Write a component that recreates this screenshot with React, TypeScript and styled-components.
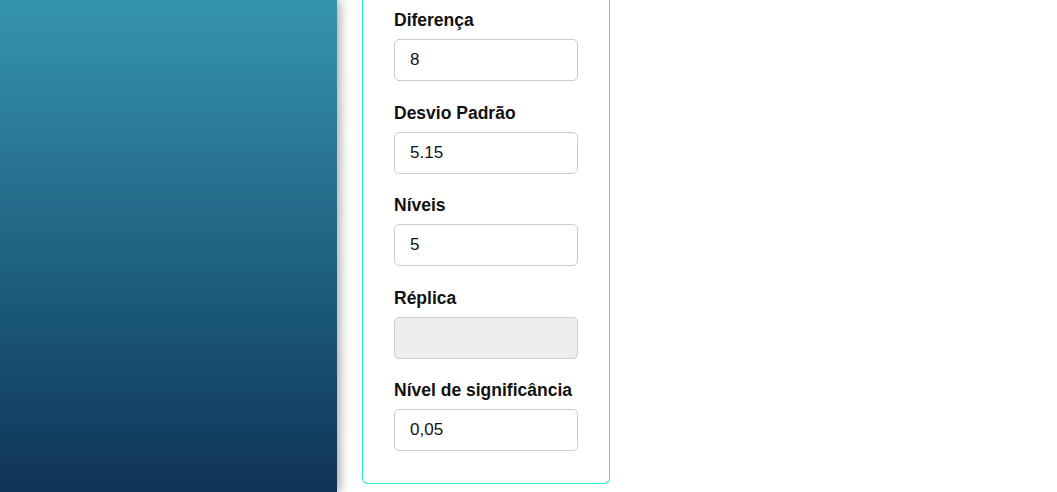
import React from "react";
import styled, { createGlobalStyle } from "styled-components";

const Global = createGlobalStyle`
  html, body { margin: 0; padding: 0; height: 100%; background: #fff; }
  body { font-family: "Liberation Sans", Arial, sans-serif; overflow: hidden; }
  #root { height: 100%; }
`;

const Layout = styled.div`
  display: flex;
  height: 492px;
`;

const Sidebar = styled.aside`
  width: 337px;
  flex-shrink: 0;
  background: linear-gradient(180deg, #3594b0 0%, #2a7896 30%, #1a5676 65%, #0f3355 100%);
  box-shadow: 3px 0 10px rgba(0, 0, 0, 0.35);
  z-index: 1;
`;

const Main = styled.main`
  flex: 1;
  padding-left: 25px;
`;

const Card = styled.section`
  width: 248px;
  box-sizing: border-box;
  border: 1px solid #22ecd2;
  border-top: none;
  border-radius: 0 0 6px 6px;
  padding: 10px 31px 32px 31px;
  display: flex;
  flex-direction: column;
  gap: 21.5px;
`;

const Field = styled.div`
  display: flex;
  flex-direction: column;
  gap: 8px;
`;

const Label = styled.label`
  font-size: 17.5px;
  font-weight: 700;
  line-height: 21px;
  color: #111;
`;

const Input = styled.input<{ $disabled?: boolean }>`
  box-sizing: border-box;
  width: 184px;
  height: 42px;
  border: 1px solid #cccccc;
  border-radius: 5px;
  padding: 0 15px;
  font-family: "Liberation Sans", Arial, sans-serif;
  font-size: 17px;
  color: #111;
  background: ${(p) => (p.$disabled ? "#eeeeee" : "#ffffff")};
  outline: none;
`;

const fields = [
  { label: "Diferença", value: "8" },
  { label: "Desvio Padrão", value: "5.15" },
  { label: "Níveis", value: "5" },
  { label: "Réplica", value: "", disabled: true },
  { label: "Nível de significância", value: "0,05" },
];

export default function App() {
  return (
    <>
      <Global />
      <Layout>
        <Sidebar />
        <Main>
          <Card>
            {fields.map((f) => (
              <Field key={f.label}>
                <Label>{f.label}</Label>
                <Input
                  $disabled={f.disabled}
                  defaultValue={f.value}
                  readOnly
                />
              </Field>
            ))}
          </Card>
        </Main>
      </Layout>
    </>
  );
}
